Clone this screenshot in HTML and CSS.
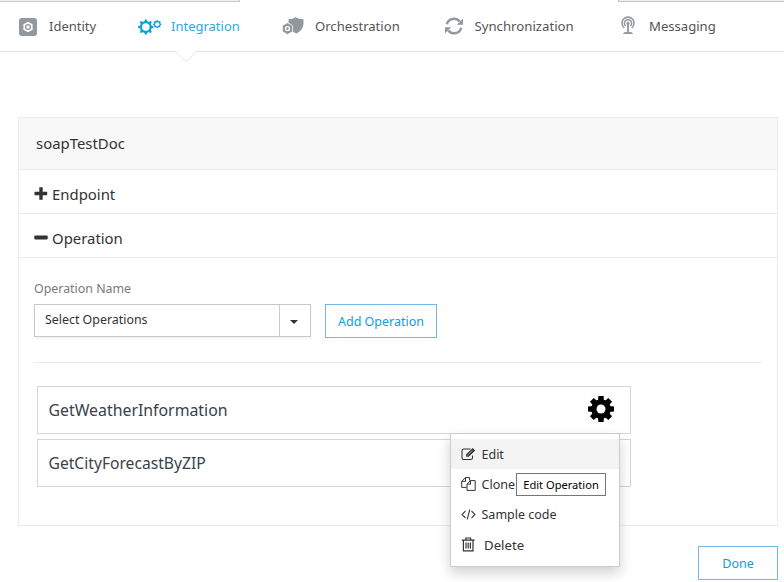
FILE: index.html
```html
<!DOCTYPE html>
<html lang="en">
<head>
<meta charset="utf-8">
<title>Integration</title>
<link rel="stylesheet" href="styles.css">
</head>
<body>
<svg class="defs" width="0" height="0">
  <symbol id="gear" viewBox="-13 -13 26 26">
    <g id="teeth"><path id="tooth" d="M-3-8-2.6-13H2.6L3-8V8L2.6 13H-2.6L-3 8Z"/>
    <use href="#tooth" transform="rotate(45)"/><use href="#tooth" transform="rotate(90)"/><use href="#tooth" transform="rotate(135)"/></g>
    <circle r="9.8"/><circle r="4.5" fill="#fff"/>
  </symbol>
  <symbol id="gear-thin" viewBox="-13 -13 26 26">
    <path id="spike" d="M-3-8-1.2-13H1.2L3-8V8L1.2 13H-1.2L-3 8Z"/>
    <use href="#spike" transform="rotate(45)"/><use href="#spike" transform="rotate(90)"/><use href="#spike" transform="rotate(135)"/>
    <circle r="9.8"/><circle r="6.3" fill="#fff"/>
  </symbol>
</svg>
<div class="tab-strip"><span class="strip-left"></span><span class="strip-right"></span></div>
<nav class="nav">
  <a class="nav-item identity">
    <svg width="18" height="18" viewBox="0 0 18 18"><rect width="18" height="18" rx="3" fill="#92999e"/><path d="M9 3.7 13.6 6.3V11.7L9 14.3 4.4 11.7V6.3Z" fill="#fff"/><circle cx="9" cy="9" r="2.4" fill="none" stroke="#92999e" stroke-width="1.3"/></svg>
    <span>Identity</span>
  </a>
  <a class="nav-item integration">
    <svg width="24" height="18" viewBox="0 0 24 18" fill="#0aa2dc"><use href="#gear-thin" x="0" y="1.2" width="15.6" height="15.6"/><use href="#gear-thin" x="15" y="2" width="8.6" height="8.6"/></svg>
    <span>Integration</span>
    <svg class="notch" width="22" height="12" viewBox="0 0 22 12"><path d="M1 0H21V1L11 10.5 1 1Z" fill="#fff"/><path d="M.5.5 11 10.5 21.5.5" fill="none" stroke="#e6e6e6"/></svg>
  </a>
  <a class="nav-item orchestration">
    <svg width="22" height="18" viewBox="0 0 22 18"><path d="M6.5 2.2C9.500 2.200 11.500 1.500 13.600.3 16 1.500 18 2.200 21.500 2.200V6C21.500 11 18.500 14.700 14.200 16.500L10.500 14.500V9L6.500 5.500Z" fill="#92999e"/><path d="M5.500 5.700 10.600 8.600V14.600L5.500 17.500.4 14.600V8.600Z" fill="#92999e" stroke="#fff" stroke-width=".7"/><circle cx="5.500" cy="11.600" r="2" fill="none" stroke="#fff" stroke-width="1.300"/></svg>
    <span>Orchestration</span>
  </a>
  <a class="nav-item sync">
    <svg width="18" height="18" viewBox="0 0 18 18"><g fill="none" stroke="#92999e" stroke-width="2.500"><path d="M1.800 7.300A7.300 7.300 0 0 1 14.600 4.500"/><path d="M16.200 10.700A7.300 7.300 0 0 1 3.400 13.500"/></g><path d="M18 1.500V7.700H11.800ZM0 16.500V10.300H6.200Z" fill="#92999e"/></svg>
    <span>Synchronization</span>
  </a>
  <a class="nav-item messaging">
    <svg width="14" height="19" viewBox="0 0 14 19" fill="none" stroke="#92999e"><path d="M3.200 11.800A6 6 0 1 1 10.800 11.800" stroke-width="1.600"/><path d="M4.700 10A3.600 3.600 0 1 1 9.300 10" stroke-width="1.500"/><circle cx="7" cy="7.200" r="1.500" fill="#92999e" stroke="none"/><path d="M7 7V16.500" stroke-width="1.900"/><path d="M2 18Q2.500 16 4.500 16H9.500Q11.500 16 12 18Z" fill="#92999e" stroke="none"/></svg>
    <span>Messaging</span>
  </a>
</nav>
<main class="main">
  <section class="panel">
    <h1 class="panel-title">soapTestDoc</h1>
    <div class="section-row"><svg width="14" height="14" viewBox="0 0 14 14"><path d="M5.300.3H8.700V4.800H13.200V8.200H8.700V12.700H5.300V8.200H.5V4.800H5.300Z" fill="#333"/></svg><span>Endpoint</span></div>
    <div class="section-row"><svg width="14" height="14" viewBox="0 0 14 14"><rect x=".3" y="4.600" width="13.400" height="3.800" rx=".8" fill="#333"/></svg><span>Operation</span></div>
    <div class="operation">
      <label class="label">Operation Name</label>
      <div class="form-row">
        <div class="select"><span class="select-value">Select Operations</span><span class="select-arrow"><svg width="8" height="4" viewBox="0 0 8 4"><path d="M0 0H8L4 4Z" fill="#333"/></svg></span></div>
        <button class="btn add">Add Operation</button>
      </div>
      <hr class="divider">
      <div class="op-card"><span>GetWeatherInformation</span>
        <svg class="cog" width="26" height="26"><use href="#gear" width="26" height="26"/></svg>
        <ul class="menu">
          <li class="menu-item active"><svg width="15" height="14" viewBox="0 0 15 14" fill="none" stroke="#333" stroke-width="1.100"><path d="M9.500 2H2.800Q1 2 1 3.800V10.700Q1 12.500 2.800 12.500H9.700Q11.500 12.500 11.500 10.700V8.500"/><path d="M5.200 9.700V7.200L11.700.9 14.200 3.400 7.700 9.700Z" fill="#333" stroke="none"/><path d="M6.400 8.400 11.500 3.300" stroke="#f3f3f3" stroke-width=".6"/></svg><span>Edit</span></li>
          <li class="menu-item"><svg width="15" height="14" viewBox="0 0 15 14" fill="none" stroke="#333" stroke-width="1"><path d="M8.500 3.500V.6H4.500L.7 4.400V10.400H5.500M4.500.6V4.400H.7"/><path d="M9.500 3.600H14.200V13.400H6V7.100ZM9.500 3.600V7.100H6"/></svg><span>Clone</span><span class="tooltip">Edit Operation</span></li>
          <li class="menu-item"><svg width="15" height="14" viewBox="0 0 15 14" fill="none" stroke="#444" stroke-width="1.100"><path d="M4.500 4 1 7.500 4.500 11M10.500 4 14 7.500 10.500 11M8.800 2.500 6.200 12.500"/></svg><span>Sample code</span></li>
          <li class="menu-item delete"><svg width="14" height="15" viewBox="0 0 14 15" fill="none" stroke="#333" stroke-width="1.200"><path d="M.8 3.200H13.600M4.900 3V1H9.600V3M2.400 3.500V13.800H12V3.500M5 5.500V11.500M7.200 5.500V11.500M9.400 5.500V11.500"/></svg><span>Delete</span></li>
        </ul>
      </div>
      <div class="op-card second"><span>GetCityForecastByZIP</span></div>
    </div>
  </section>
  <div class="footer"><button class="btn done">Done</button></div>
</main>
</body>
</html>
```
FILE: styles.css
```css
* { box-sizing: border-box; }
body { margin: 0; height: 582px; overflow: hidden; background: #fff; color: #333; font-family: "Noto Sans", sans-serif; font-size: 12.4px; }
svg { display: block; flex: none; }
.defs { position: absolute; }
.tab-strip { display: flex; justify-content: space-between; height: 2px; }
.strip-left { width: 240px; background: #efefef; border-bottom: 1px solid #c6c9cc; border-right: 1px solid #c6c9cc; }
.strip-right { width: 166px; background: #efefef; border-bottom: 1px solid #c4c4c4; border-left: 1px solid #c4c4c4; }
.nav { display: flex; height: 50px; padding-left: 19px; border-bottom: 1px solid #e2e2e2; }
.nav-item { position: relative; display: flex; align-items: center; height: 49px; color: #555; font-size: 13px; white-space: nowrap; }
.identity { width: 119px; gap: 12px; }
.integration { width: 144px; gap: 9px; color: #2fa8e0; }
.orchestration { width: 163px; gap: 11px; font-size: 13.1px; }
.sync { width: 176px; gap: 11.500px; font-size: 13.2px; }
.messaging { gap: 14px; font-size: 13.1px; }
.nav-item > span { padding-bottom: 1px; }
.messaging svg, .orchestration svg, .sync svg { margin-bottom: 2px; }
.notch { position: absolute; left: 37px; top: 49px; }
.main { padding: 65px 6px 0 18px; }
.panel { height: 409px; border: 1px solid #ebebeb; }
.panel-title { height: 52px; margin: 0; padding-left: 17px; background: #f8f8f8; border-bottom: 1px solid #ebebeb; font-size: 14.9px; font-weight: 400; line-height: 51px; }
.section-row { display: flex; align-items: center; gap: 4px; height: 44px; padding: 5px 0 0 15px; border-bottom: 1px solid #ebebeb; font-size: 14.9px; }
.section-row svg { margin-bottom: 1px; }
.operation { padding: 21px 15px 0; }
.label { display: block; height: 25px; line-height: 19px; color: #777b81; }
.form-row { display: flex; align-items: flex-start; gap: 14px; height: 34px; }
.select { display: flex; width: 277px; height: 33px; border: 1px solid #c8c8c8; box-shadow: 0 2px 2px #f5f5f5; }
.select-value { flex: 1; padding-left: 10px; line-height: 29px; }
.select-arrow { display: flex; align-items: center; justify-content: center; width: 31px; padding: 3px 2px 0 0; border-left: 1px solid #ccc; }
.btn { height: 34px; padding: 2px 0 0; background: #fff; border: 1px solid #72b8e6; color: #0d9ddb; font-family: inherit; font-size: 12.5px; line-height: 30px; }
.add { width: 112px; }
.divider { margin: 24px 0 23px; border: 0; border-top: 1px solid #ebebeb; }
.op-card { position: relative; display: flex; justify-content: space-between; align-items: center; width: 594px; height: 48px; margin: 0 0 5px 3px; padding: 0 16px 0 10.500px; border: 1px solid #d6d6d6; color: #38424b; font-size: 15.85px; }
.second { font-size: 15.65px; }
.cog { margin-bottom: 2px; fill: #000; }
.menu { position: absolute; z-index: 1; left: 412px; top: 46px; width: 170px; height: 134px; margin: 0; padding: 5px 0 0; list-style: none; background: #fff; border: 1px solid #ccc; box-shadow: 0 6px 12px rgba(0,0,0,.18); color: #333; font-size: 12.5px; }
.menu-item { position: relative; display: flex; align-items: center; gap: 5.500px; height: 30px; padding-left: 10px; }
.active { background: #f3f3f3; }
.delete { gap: 9px; padding-top: 2px; font-size: 13.2px; }
.delete svg { margin-bottom: 2px; }
.tooltip { position: absolute; left: 65px; top: 4px; width: 90px; height: 23px; background: #fff; border: 1px solid #767676; color: #000; font-size: 11.1px; line-height: 22px; text-align: center; }
.footer { display: flex; justify-content: flex-end; padding-top: 20px; }
.done { width: 80px; }
```
